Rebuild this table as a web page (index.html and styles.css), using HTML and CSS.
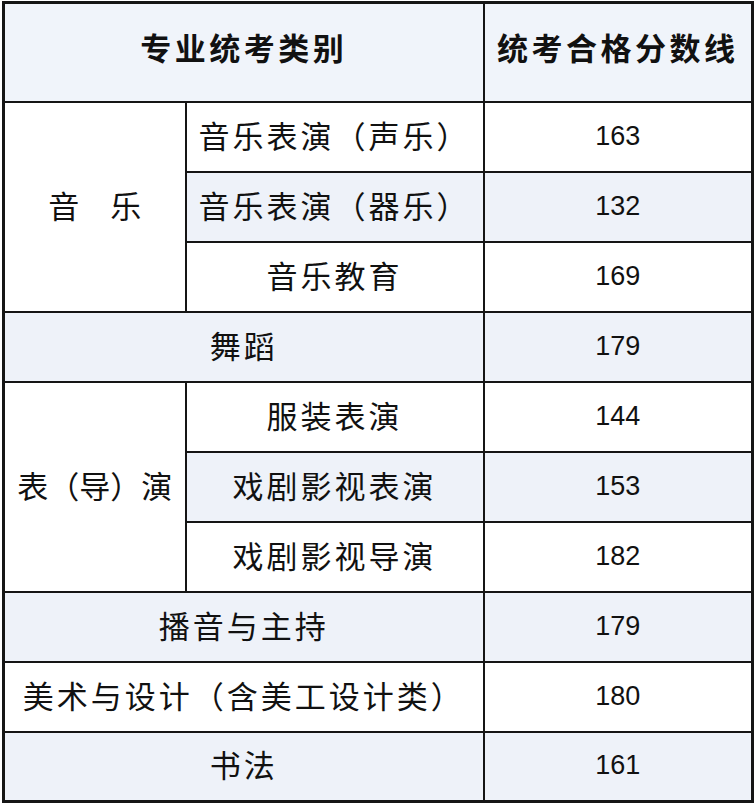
FILE: index.html
```html
<!DOCTYPE html>
<html lang="zh">
<head>
<meta charset="utf-8">
<link rel="stylesheet" href="styles.css">
</head>
<body>
<table class="score-table">
  <colgroup>
    <col class="c1"><col class="c2"><col class="c3">
  </colgroup>
  <thead>
    <tr class="head">
      <th colspan="2">专业统考类别</th>
      <th>统考合格分数线</th>
    </tr>
  </thead>
  <tbody>
    <tr>
      <td rowspan="3" class="group">音　乐</td>
      <td>音乐表演（声乐）</td>
      <td class="num">163</td>
    </tr>
    <tr class="shade">
      <td>音乐表演（器乐）</td>
      <td class="num">132</td>
    </tr>
    <tr>
      <td>音乐教育</td>
      <td class="num">169</td>
    </tr>
    <tr class="shade">
      <td colspan="2">舞蹈</td>
      <td class="num">179</td>
    </tr>
    <tr>
      <td rowspan="3" class="group">表（导）演</td>
      <td>服装表演</td>
      <td class="num">144</td>
    </tr>
    <tr class="shade">
      <td>戏剧影视表演</td>
      <td class="num">153</td>
    </tr>
    <tr>
      <td>戏剧影视导演</td>
      <td class="num">182</td>
    </tr>
    <tr class="shade">
      <td colspan="2">播音与主持</td>
      <td class="num">179</td>
    </tr>
    <tr>
      <td colspan="2">美术与设计（含美工设计类）</td>
      <td class="num">180</td>
    </tr>
    <tr class="shade">
      <td colspan="2">书法</td>
      <td class="num">161</td>
    </tr>
  </tbody>
</table>
</body>
</html>
```
FILE: styles.css
```css
html, body {
  margin: 0;
  padding: 0;
  background: #ffffff;
}
body {
  padding: 1px 0 0 2px;
  font-family: "Noto Sans CJK SC", "Noto Sans", sans-serif;
  color: #111;
}
.score-table {
  border-collapse: collapse;
  border: 3px solid #151515;
  width: 749px;
  table-layout: fixed;
}
.c1 { width: 182px; }
.c2 { width: 298px; }
.c3 { width: 269px; }
.score-table th,
.score-table td {
  border: 2px solid #151515;
  text-align: center;
  vertical-align: middle;
  padding: 0 0 5px;
  font-size: 31px;
  font-weight: 400;
  letter-spacing: 3px;
  line-height: 1;
}
.score-table tr { height: 70px; }
.score-table tr.head { height: 99px; background: #f0f4fa; }
.score-table th {
  font-weight: 700;
  font-size: 31px;
  letter-spacing: 3.5px;
  padding-bottom: 12px;
}
.score-table td.group { letter-spacing: 0; }
.score-table tr.shade td { background: #eef2f9; }
.score-table tr.shade td.group { background: #fff; }
.score-table td.num {
  font-family: "Liberation Sans", Arial, sans-serif;
  font-size: 27px;
  letter-spacing: 0;
  padding-bottom: 1px;
}
```
